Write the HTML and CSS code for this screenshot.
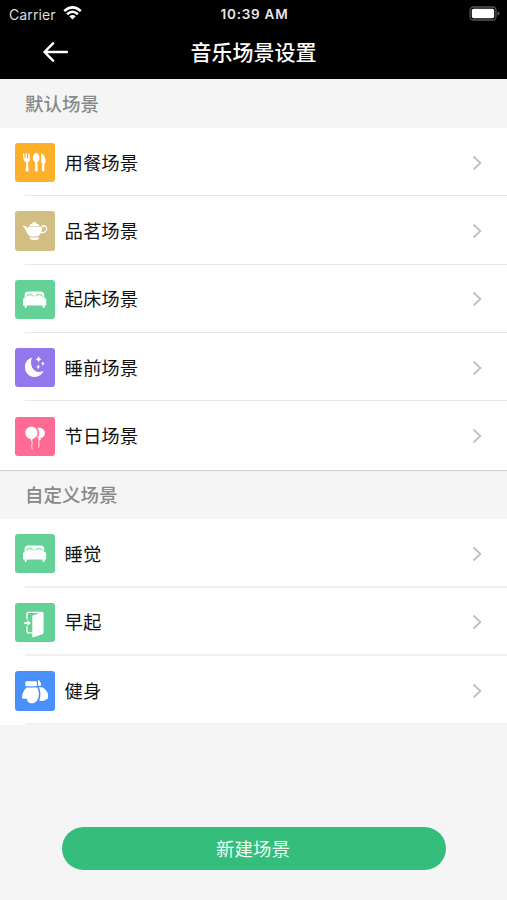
FILE: index.html
```html
<!DOCTYPE html>
<html lang="zh-CN">
<head>
    <meta charset="UTF-8">
    <meta name="viewport" content="width=device-width, initial-scale=1.0">
    <title>音乐场景设置</title>
    <link rel="stylesheet" href="styles.css">
</head>
<body>
    <svg class="symbols">
        <symbol id="chevron" viewBox="0 0 10 16">
            <path d="M1.5 1.5 8.3 8 1.5 14.5" fill="none" stroke="#c3c3c6" stroke-width="2"/>
        </symbol>
        <symbol id="bed" viewBox="0 0 118 118">
            <path d="M29 54V46q0-11 11-11h37q11 0 11 11v8z"/>
            <path d="M35 50q0-6 10-6t12 5M61 49q3-5 12-5t10 6" fill="none" stroke="#64d296" stroke-width="3"/>
            <path d="M29 54h60q5 0 5 6v17h-5v5q-3 4-6 0v-5H35v5q-3 4-6 0v-5h-5V60q0-6 5-6z"/>
        </symbol>
    </svg>

    <header class="header">
        <div class="status-bar">
            <div class="carrier">
                <span>Carrier</span>
                <svg class="wifi" viewBox="0 0 19 14">
                    <path d="M1.2 5.2Q9.5-2.4 17.8 5.2M4.1 8.2Q9.5 3.4 14.9 8.2" fill="none" stroke="#fff" stroke-width="2.5"/>
                    <path d="M6.3 10.3Q9.5 7.5 12.7 10.3L9.5 13.6z" fill="#fff"/>
                </svg>
            </div>
            <span class="time">10:39 AM</span>
            <svg class="battery" viewBox="0 0 31 15">
                <rect x="1" y="1" width="26" height="13" rx="3.5" fill="none" stroke="#555" stroke-width="1.3"/>
                <rect x="2.8" y="2.8" width="22.4" height="9.4" rx="1.8" fill="#fff"/>
                <path d="M28.5 5.4q2 .6 2 2.1t-2 2.1z" fill="#666"/>
            </svg>
        </div>
        <div class="nav-bar">
            <svg class="back" viewBox="0 0 25 20">
                <path d="M10 1.3 1.5 10 10 18.7M1.5 10H24" fill="none" stroke="#fff" stroke-width="2.5" stroke-linecap="round" stroke-linejoin="round"/>
            </svg>
            <h1 class="title">音乐场景设置</h1>
        </div>
    </header>

    <main>
        <h2 class="section-title">默认场景</h2>
        <ul class="list">
            <li class="row">
                <svg class="icon orange" viewBox="0 0 118 118">
                    <path d="M24 32q2-2 4 0l1 15h3V32q2-2 4 0v15h3l1-15q2-2 4 0l1 17q0 7-6 9l2 25q-4 7-9 0l2-25q-7-2-8-9z"/>
                    <path d="M64 30c6 0 10 8 10 16 0 6-3 10-7 12l2 25q-5 7-10 0l2-25c-4-2-7-6-7-12 0-8 4-16 10-16z"/>
                    <path d="M79 31c7 1 13 13 13 25q0 6-4 7l1 20q-4 7-8 0l1-23-3-3z"/>
                </svg>
                <span class="name">用餐场景</span>
                <svg class="chevron"><use href="#chevron"/></svg>
            </li>
            <li class="row">
                <svg class="icon sand" viewBox="0 0 118 118">
                    <path d="M43 45q1-6 9-7 0-6 6-6t6 6q8 1 10 7z"/>
                    <path d="M23 45q9-3 14 6 4-4 9-4h27q6 0 9 5-1 18-15 25H48Q36 71 34 62q-4-11-11-17z"/>
                    <path d="M80 49q3-6 9-4 8 3 6 11-3 9-17 10" fill="none" stroke="#fff" stroke-width="4"/>
                    <path d="M43 80h31q-2 7-11 7h-9q-9 0-11-7z"/>
                </svg>
                <span class="name">品茗场景</span>
                <svg class="chevron"><use href="#chevron"/></svg>
            </li>
            <li class="row">
                <svg class="icon green"><use href="#bed"/></svg>
                <span class="name">起床场景</span>
                <svg class="chevron"><use href="#chevron"/></svg>
            </li>
            <li class="row">
                <svg class="icon purple" viewBox="0 0 118 118">
                    <path d="M51 29C38 32 30 43 30 57c0 17 12 30 29 30 13 0 23-7 27-19-5 4-10 5-15 4-18-2-28-23-20-43z"/>
                    <path d="m71 25 3 6 6 3-6 3-3 7-3-7-6-3 6-3zM84 40l2 5 4 2-4 2-2 5-2-5-4-2 4-2zM70 49l2 6 5 2-5 2-2 6-2-6-5-2 5-2z"/>
                </svg>
                <span class="name">睡前场景</span>
                <svg class="chevron"><use href="#chevron"/></svg>
            </li>
            <li class="row">
                <svg class="icon pink" viewBox="0 0 118 118">
                    <path d="M66 34c12-5 24 4 24 15 0 8-6 13-14 16l2 4h-8l2-5c-3 0-5-1-6-3 8-8 8-19 0-27z"/>
                    <path d="M49 29c11 0 19 8 19 19 0 9-7 16-16 18l2 4h-8l2-4C38 65 31 57 31 48c0-11 7-19 18-19z"/>
                    <path d="M50 70q3 7 1 13t1 15M74 68q-4 6-2 11t-1 13" fill="none" stroke="#fff" stroke-width="2.5"/>
                    <path d="M65 32q9 8 7 19-1 7-8 12" fill="none" stroke="#ff6b92" stroke-width="2.5"/>
                </svg>
                <span class="name">节日场景</span>
                <svg class="chevron"><use href="#chevron"/></svg>
            </li>
        </ul>

        <h2 class="section-title custom">自定义场景</h2>
        <ul class="list">
            <li class="row light">
                <svg class="icon green"><use href="#bed"/></svg>
                <span class="name">睡觉</span>
                <svg class="chevron"><use href="#chevron"/></svg>
            </li>
            <li class="row light">
                <svg class="icon green" viewBox="0 0 118 118">
                    <path d="M36 50V34q0-6 6-6h38M36 70v14q0 6 6 6h9" fill="none" stroke="#fff" stroke-width="4"/>
                    <path d="M52 41q0-3 3-4l27-10q4 0 4 4v58q0 4-4 5l-26 9q-4 1-4-3z"/>
                    <path d="M28 57h9v-6l11 9-11 9v-6h-9z"/>
                </svg>
                <span class="name">早起</span>
                <svg class="chevron"><use href="#chevron"/></svg>
            </li>
            <li class="row light">
                <svg class="icon blue" viewBox="0 0 118 118">
                    <rect x="31" y="31" width="35" height="15" rx="4"/>
                    <path d="M35 50h32c6 12 7 27 0 38-9 13-26 12-31-1l-1-5c-5 3-14 3-14-2 0-9 6-24 14-30z"/>
                    <path d="M69 26q9 4 10 18l-9 1z"/>
                    <path d="M72 49h9c10 4 19 15 19 26 0 7-4 11-8 11-5 5-12 6-19 3 5-13 5-27-1-40z"/>
                </svg>
                <span class="name">健身</span>
                <svg class="chevron"><use href="#chevron"/></svg>
            </li>
        </ul>
    </main>

    <button class="create">新建场景</button>
</body>
</html>
```
FILE: styles.css
```css
* {
    margin: 0;
    padding: 0;
    box-sizing: border-box;
}
body {
    min-height: 100vh;
    background: #f5f5f5;
    color: #111;
    font-family: Inter, "Noto Sans CJK SC", sans-serif;
}
.symbols {
    display: none;
}
.header {
    height: 79px;
    background: #000;
    color: #fff;
}
.status-bar {
    display: grid;
    grid-template-columns: 1fr auto 1fr;
    align-items: center;
    height: 28px;
    padding: 0 7px 0 9px;
    font-size: 13.5px;
}
.carrier {
    display: flex;
    align-items: center;
    gap: 7px;
    color: #ddd;
    font-size: 14px;
    letter-spacing: 0.1px;
}
.wifi {
    width: 19px;
    height: 14px;
    margin-top: -2px;
}
.time {
    font-weight: 600;
    color: #e8e8e8;
    letter-spacing: 0.75px;
}
.battery {
    width: 31px;
    height: 15px;
    justify-self: end;
    margin-top: -2px;
}
.nav-bar {
    display: grid;
    grid-template-columns: 1fr auto 1fr;
    align-items: center;
    height: 48px;
}
.back {
    width: 25px;
    height: 20px;
    margin: 0 0 2px 43px;
}
.title {
    font-size: 21px;
    font-weight: 500;
    line-height: 50px;
}
.section-title {
    height: 49px;
    padding-left: 25px;
    line-height: 51px;
    font-size: 18.5px;
    font-weight: 500;
    color: #888;
}
.section-title.custom {
    height: 49px;
    line-height: 49px;
    border-top: 1px solid #d0d0d0;
}
.list {
    list-style: none;
    background: #fff;
}
.row {
    display: flex;
    align-items: center;
    height: 68.4px;
    padding: 1px 25px 0 15.4px;
    background: linear-gradient(#e6e7e8, #e6e7e8) 25px 100% / 100% 1.2px no-repeat;
}
.row.light {
    height: 68.6px;
    background-image: linear-gradient(#f0f0f0, #f0f0f0);
    background-size: 100% 2px;
}
.list .row:last-child:not(.light) {
    background: none;
}
.icon {
    width: 39.2px;
    height: 39.2px;
    border-radius: 3px;
    fill: #fff;
}
.orange { background: #ffb02b; }
.sand { background: #d2bd83; }
.green { background: #64d296; }
.purple { background: #9378ed; }
.pink { background: #ff6b92; }
.blue { background: #4990fb; }
.name {
    flex: 1;
    margin-left: 10px;
    font-size: 18.4px;
    line-height: 28px;
}
.chevron {
    width: 10px;
    height: 16px;
}
.create {
    display: block;
    width: 384px;
    height: 43px;
    margin: 102px auto 0 62px;
    padding-right: 2px;
    border: none;
    border-radius: 22px;
    background: #35bd7b;
    color: #e9fff3;
    font: 400 18.5px/43px "Noto Sans CJK SC", sans-serif;
}
```
